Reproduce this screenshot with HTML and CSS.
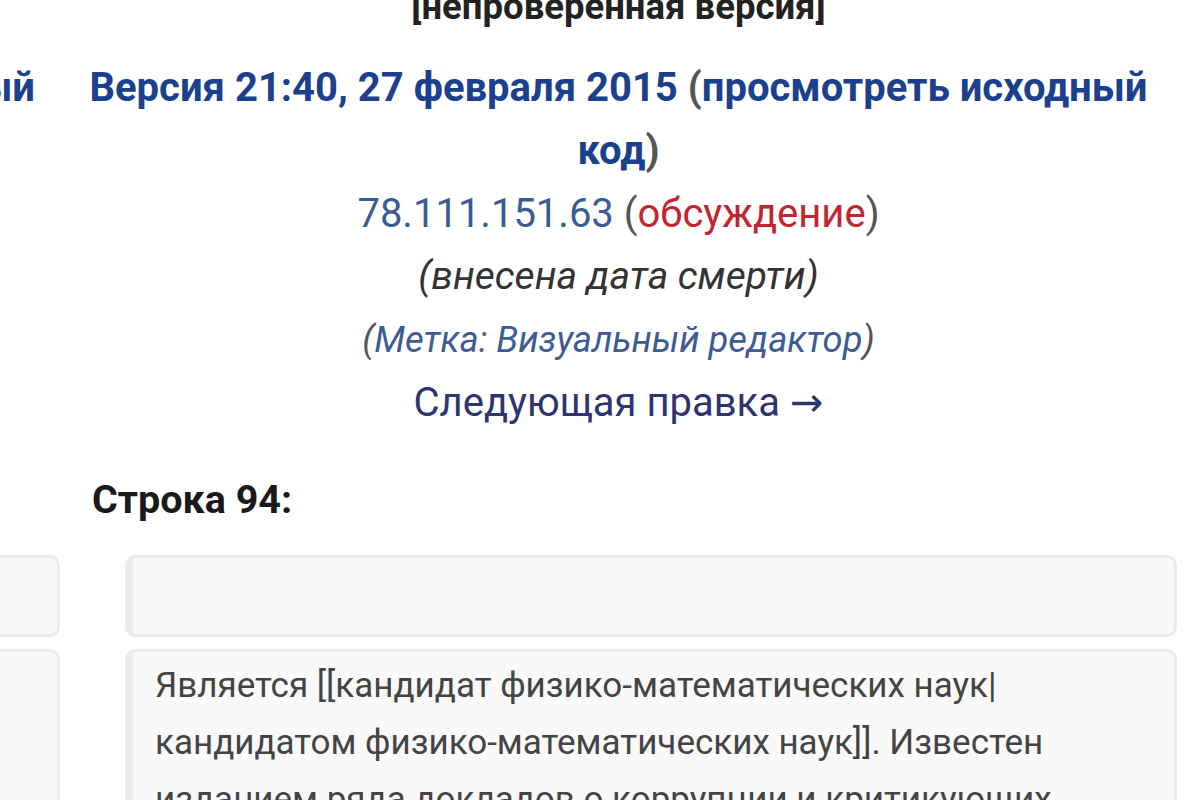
FILE: index.html
```html
<!DOCTYPE html>
<html lang="ru">
<head>
<meta charset="utf-8">
<title>Разница между версиями</title>
<link rel="stylesheet" href="styles.css">
</head>
<body>
<div class="diff">
  <div class="head head-left">
    <div class="status">&nbsp;</div>
    <div class="title"><a class="link-strong">просмотреть исходный</a></div>
  </div>
  <div class="head head-right">
    <div class="status">[непроверенная версия]</div>
    <div class="title"><a class="link-strong">Версия 21:40, 27 февраля 2015</a> <span class="paren">(</span><a class="link-strong">просмотреть исходный код</a><span class="paren">)</span></div>
    <div class="user"><a class="link-ip">78.111.151.63</a> <span class="paren">(</span><a class="link-red">обсуждение</a><span class="paren">)</span></div>
    <div class="comment">(внесена дата смерти)</div>
    <div class="tag"><span class="paren">(</span><a class="link-tag">Метка</a>: <a class="link-tag">Визуальный редактор</a><span class="paren">)</span></div>
    <div class="next"><a class="link-next">Следующая правка →</a></div>
  </div>

  <div class="lineno">Строка 94:</div>

  <div class="cell cell-left empty"></div>
  <div class="cell cell-right empty"></div>

  <div class="cell cell-left text"></div>
  <div class="cell cell-right text">Является [[кандидат физико-математических наук|<br>кандидатом физико-математических наук]]. Известен<br>изданием ряда докладов о коррупции и критикующих</div>
</div>
</body>
</html>
```

FILE: styles.css
```css
html, body {
  margin: 0;
  padding: 0;
  background: #ffffff;
  overflow: hidden;
}

body {
  font-family: Roboto, "Noto Sans", "DejaVu Sans", sans-serif;
  color: #222222;
}

.diff {
  display: grid;
  grid-template-columns: 60px 65px 1052px;
  margin-top: -25px;
}

.head {
  line-height: 63px;
  font-size: 39px;
}

.head-left {
  grid-column: 1;
  overflow: hidden;
  white-space: nowrap;
  direction: rtl;
  text-align: left;
  padding-right: 25px;
}

.head-left .title {
  direction: ltr;
  display: inline-block;
}

.head-right {
  grid-column: 2 / 4;
  text-align: center;
}

.status {
  font-weight: 700;
  font-size: 36.5px;
  color: #222222;
  height: 81px;
}

.title {
  font-weight: 700;
  font-size: 40px;
}

.link-strong {
  color: #1b408d;
}

.paren {
  color: #555555;
}

.user {
  font-size: 40px;
}

.link-ip {
  color: #3a5b93;
}

.link-red {
  color: #c2252e;
}

.comment {
  font-style: italic;
  font-size: 39px;
  color: #333333;
}

.tag {
  font-style: italic;
  font-size: 36.3px;
  color: #4a6494;
}

.link-tag {
  color: #3d5c94;
}

.link-next {
  color: #2e3470;
  font-size: 40px;
}

.lineno {
  grid-column: 2 / 4;
  padding-left: 32px;
  font-weight: 700;
  font-size: 39.5px;
  color: #1a1a1a;
  margin-top: 35px;
  margin-bottom: 25px;
  line-height: 60px;
}

.cell {
  background: #f9f9f9;
  border: 3px solid #ebebeb;
  border-left-width: 8px;
  border-radius: 10px;
  box-sizing: border-box;
  margin-bottom: 12px;
}

.cell-left {
  grid-column: 1;
  border-left: none;
  border-top-left-radius: 0;
  border-bottom-left-radius: 0;
}

.cell-right {
  grid-column: 3;
}

.empty {
  height: 82px;
}

.text {
  min-height: 200px;
  padding: 5px 22px;
  font-size: 35px;
  line-height: 57px;
  color: #444444;
}
```
